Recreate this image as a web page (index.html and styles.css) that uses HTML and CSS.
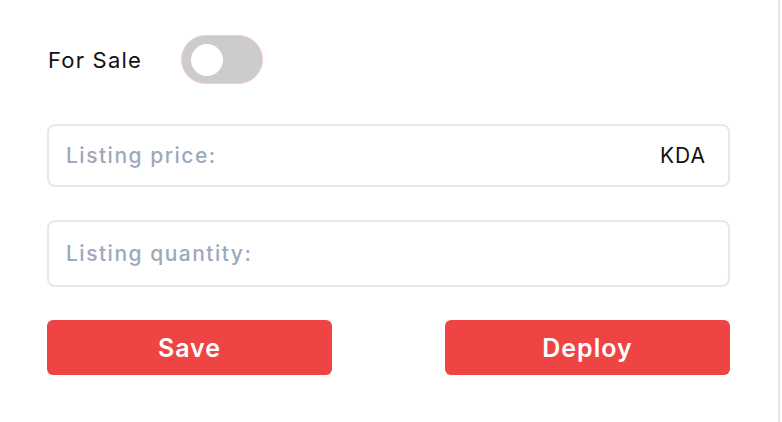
FILE: index.html
```html
<!DOCTYPE html>
<html lang="en">
<head>
    <meta charset="UTF-8">
    <meta name="viewport" content="width=device-width, initial-scale=1.0">
    <title>Listing Settings</title>
    <link rel="stylesheet" href="styles.css">
</head>
<body>
    <div class="panel">
        <div class="sale-row">
            <span class="sale-label">For Sale</span>
            <label class="toggle">
                <span class="toggle-knob"></span>
            </label>
        </div>

        <div class="field field-price">
            <span class="field-label">Listing price:</span>
            <span class="field-unit">KDA</span>
        </div>

        <div class="field field-qty">
            <span class="field-label">Listing quantity:</span>
        </div>

        <div class="actions">
            <button class="btn">Save</button>
            <button class="btn">Deploy</button>
        </div>
    </div>
</body>
</html>
```

FILE: styles.css
```css
:root {
    --red: #ef4444;
    --border-color: #e5e7eb;
    --muted: #9ea8bb;
    --text-primary: #111111;
}

* {
    margin: 0;
    padding: 0;
    box-sizing: border-box;
    font-family: 'Inter', 'Open Sans', sans-serif;
}

body {
    background-color: #fff;
    width: 782px;
    height: 422px;
    overflow: hidden;
}

.panel {
    width: 780px;
    height: 422px;
    border-right: 2px solid #e6e5ec;
    padding: 35px 0 0 47px;
}

.panel > * {
    width: 683px;
}

.sale-row {
    display: flex;
    align-items: center;
    height: 49px;
}

.sale-label {
    font-size: 22px;
    letter-spacing: 1.2px;
    color: var(--text-primary);
    width: 134px;
    padding-left: 1px;
}

.toggle {
    width: 82px;
    height: 49px;
    border-radius: 25px;
    border: 1px solid #f8c8dc;
    background-color: #cccccc;
    display: flex;
    align-items: center;
    padding-left: 9px;
}

.toggle-knob {
    width: 32px;
    height: 32px;
    border-radius: 50%;
    background-color: #fff;
}

.field {
    display: flex;
    justify-content: space-between;
    align-items: center;
    border: 2px solid var(--border-color);
    border-radius: 8px;
    padding: 0 23px 0 17px;
}

.field-price {
    margin-top: 40px;
    height: 63px;
}

.field-qty {
    margin-top: 33px;
    height: 67px;
}

.field-label {
    font-size: 21px;
    font-weight: 500;
    letter-spacing: 1.5px;
    color: var(--muted);
}

.field-unit {
    font-size: 21px;
    letter-spacing: 1px;
    margin-right: -1px;
    color: var(--text-primary);
}

.actions {
    display: flex;
    justify-content: space-between;
    margin-top: 33px;
}

.btn {
    width: 285px;
    height: 55px;
    border: none;
    border-radius: 6px;
    background-color: var(--red);
    color: #fff;
    font-size: 25px;
    font-weight: 600;
    letter-spacing: 1px;
    cursor: pointer;
}
```
